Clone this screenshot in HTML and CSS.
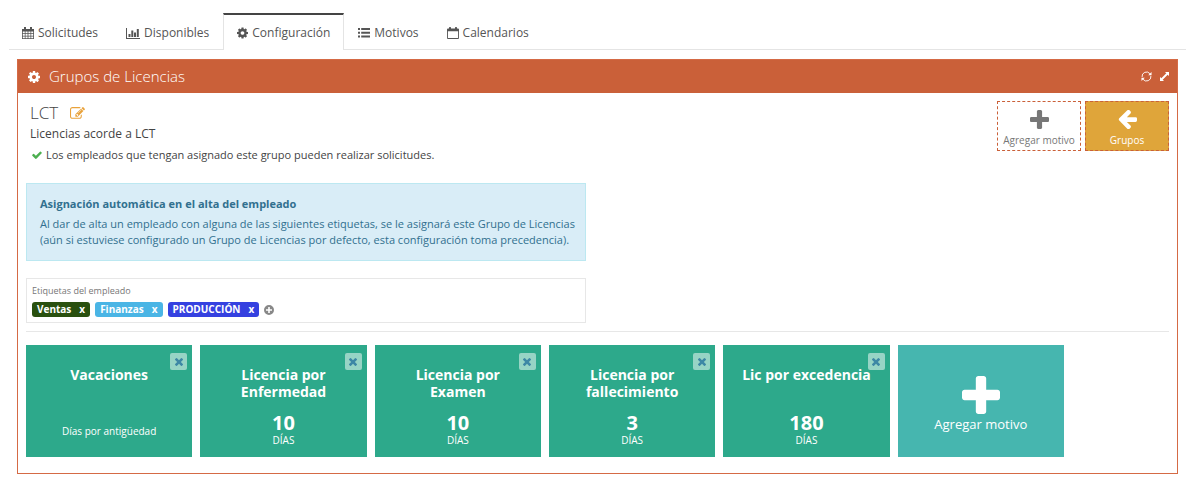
FILE: index.html
```html
<!DOCTYPE html>
<html lang="es">
<head>
<meta charset="utf-8">
<title>Grupos de Licencias</title>
<link rel="stylesheet" href="styles.css">
</head>
<body>
<svg class="sprite" aria-hidden="true">
  <symbol id="cog" viewBox="128 128 1536 1536"><path d="M1152 896q0-106-75-181t-181-75-181 75-75 181 75 181 181 75 181-75 75-181zm512-109v222q0 12-8 23t-20 13l-185 28q-19 54-39 91 35 50 107 138 10 12 10 25t-9 23q-27 37-99 108t-94 71q-12 0-26-9l-138-108q-44 23-91 38-16 136-29 186-7 28-36 28h-222q-14 0-24.500-8.500t-11.500-21.500l-28-184q-49-16-90-37l-141 107q-10 9-25 9-14 0-25-11-126-114-165-168-7-10-7-23 0-12 8-23 15-21 51-66.500t54-70.500q-27-50-41-99l-183-27q-13-2-21-12.500t-8-23.500v-222q0-12 8-23t19-13l186-28q14-46 39-92-40-57-107-138-10-12-10-24 0-10 9-23 26-36 98.500-107.500t94.500-71.500q13 0 26 10l138 107q44-23 91-38 16-136 29-186 7-28 36-28h222q14 0 24.500 8.500t11.500 21.500l28 184q49 16 90 37l142-107q9-9 24-9 13 0 25 10 129 119 165 170 7 8 7 22 0 12-8 23-15 21-51 66.500t-54 70.500q26 50 41 98l183 28q13 2 21 12.500t8 23.500z"/></symbol>
  <symbol id="plus" viewBox="192 128 1408 1408"><path d="M1600 736v192q0 40-28 68t-68 28h-416v416q0 40-28 68t-68 28h-192q-40 0-68-28t-28-68v-416h-416q-40 0-68-28t-28-68v-192q0-40 28-68t68-28h416v-416q0-40 28-68t68-28h192q40 0 68 28t28 68v416h416q40 0 68 28t28 68z"/></symbol>
  <symbol id="arrow" viewBox="128 192 1536 1536"><path d="M1664 896v128q0 53-32.500 90.500t-84.500 37.500h-704l293 294q38 36 38 90t-38 90l-75 76q-37 37-90 37-52 0-91-37l-651-652q-37-37-37-90 0-52 37-91l651-650q38-38 91-38 52 0 90 38l75 74q38 38 38 91t-38 91l-293 293h704q52 0 84.500 37.500t32.500 90.500z"/></symbol>
  <symbol id="check" viewBox="121 256 1550 1280"><path d="M1671 566q0 40-28 68l-724 724-136 136q-28 28-68 28t-68-28l-136-136-362-362q-28-28-28-68t28-68l136-136q28-28 68-28t68 28l294 295 656-657q28-28 68-28t68 28l136 136q28 28 28 68z"/></symbol>
  <symbol id="times" viewBox="302 366 1188 1188"><path d="M1490 1322q0 40-28 68l-136 136q-28 28-68 28t-68-28l-294-294-294 294q-28 28-68 28t-68-28l-136-136q-28-28-28-68t28-68l294-294-294-294q-28-28-28-68t28-68l136-136q28-28 68-28t68 28l294 294 294-294q28-28 68-28t68 28l136 136q28 28 28 68t-28 68l-294 294 294 294q28 28 28 68z"/></symbol>
  <symbol id="edit" viewBox="0 0 1792 1792"><path d="M888 1184l116-116-152-152-116 116v56h96v96h56zm440-720q-16-16-33 1l-350 350q-17 17-1 33t33-1l350-350q17-17 1-33zm80 594v190q0 119-84.500 203.500t-203.500 84.500h-832q-119 0-203.500-84.500t-84.500-203.500v-832q0-119 84.500-203.500t203.500-84.500h832q63 0 117 25 15 7 18 23 3 17-9 29l-49 49q-14 14-32 8-23-6-45-6h-832q-66 0-113 47t-47 113v832q0 66 47 113t113 47h832q66 0 113-47t47-113v-126q0-13 9-22l64-64q15-15 35-7t20 29zm-96-738l288 288-672 672h-288v-288zm444 132l-92 92-288-288 92-92q28-28 68-28t68 28l152 152q28 28 28 68t-28 68z"/></symbol>
  <symbol id="calendar" viewBox="0 0 12 12"><path fill-rule="evenodd" d="M0 2h2V0h2v2h4V0h2v2h2v10H0zM.8 4.500v1.700h2V4.500zm2.700 0v1.700h2.100V4.500zm2.900 0v1.700h2.100V4.500zm2.800 0v1.700h2V4.500zM.8 7v1.700h2V7zm2.700 0v1.700h2.100V7zm2.900 0v1.700h2.100V7zm2.800 0v1.700h2V7zM.8 9.500v1.700h2V9.500zm2.700 0v1.700h2.100V9.500zm2.900 0v1.700h2.100V9.500zm2.800 0v1.700h2V9.500z"/></symbol>
  <symbol id="calendar-o" viewBox="0 0 12 12"><path fill-rule="evenodd" d="M1 1.500h1V.7q0-.7.700-.7h.6q.7 0 .7.700v.8h4V.7q0-.7.700-.7h.6q.7 0 .7.700v.8h1q1 0 1 1V11q0 1-1 1H1q-1 0-1-1V2.500q0-1 1-1zM.9 4.200v6.900h10.200V4.200z"/></symbol>
  <symbol id="chart" viewBox="0 0 14 12"><path d="M0 1h1v10h13v1H0zM2.500 7h2v3h-2zM5.300 3.500h2V10h-2zM8 5.500h2V10H8zM10.800 2h2v8h-2z"/></symbol>
  <symbol id="list" viewBox="0 0 12 10"><path d="M0 0h2v2H0zm3.200 0H12v2H3.200zM0 3.800h2v2H0zm3.200 0H12v2H3.200zM0 7.600h2v2H0zm3.200 0H12v2H3.200z"/></symbol>
  <symbol id="refresh" viewBox="0 0 12 12"><path fill="none" stroke="currentColor" stroke-width="1" d="M1.200 6.500A4.800 4.800 0 0 1 9.800 3M10.800 5.500A4.800 4.800 0 0 1 2.200 9"/><path d="M11.500 1v3.600H7.900zM.5 11V7.400h3.600z"/></symbol>
  <symbol id="expand" viewBox="0 0 10 10"><path d="M5.500 0H10v4.500L8.500 3 3 8.500 4.500 10H0V5.500L1.500 7 7 1.500z"/></symbol>
  <symbol id="plus-circle" viewBox="0 0 10 10"><path fill-rule="evenodd" d="M5 0a5 5 0 1 1 0 10A5 5 0 0 1 5 0zM4.200 2v2.200H2v1.600h2.200V8h1.600V5.800H8V4.200H5.800V2z"/></symbol>
</svg>

<nav class="tabs">
  <a class="tab" href="#solicitudes"><svg class="icon"><use href="#calendar"/></svg>Solicitudes</a>
  <a class="tab" href="#disponibles"><svg class="icon icon-wide"><use href="#chart"/></svg>Disponibles</a>
  <a class="tab tab-active" href="#configuracion" aria-current="page"><svg class="icon icon-cog"><use href="#cog"/></svg>Configuración</a>
  <a class="tab" href="#motivos"><svg class="icon"><use href="#list"/></svg>Motivos</a>
  <a class="tab" href="#calendarios"><svg class="icon"><use href="#calendar-o"/></svg>Calendarios</a>
</nav>

<main class="panel">
  <header class="panel-head">
    <svg class="head-icon"><use href="#cog"/></svg>
    <h1 class="panel-title">Grupos de Licencias</h1>
    <button class="tool" type="button" aria-label="Actualizar"><svg class="tool-refresh"><use href="#refresh"/></svg></button>
    <button class="tool" type="button" aria-label="Expandir"><svg class="tool-expand"><use href="#expand"/></svg></button>
  </header>
  <div class="panel-body">
    <section class="intro">
      <div class="summary">
        <h2 class="group-name">LCT <button class="edit" type="button" aria-label="Editar"><svg class="edit-icon"><use href="#edit"/></svg></button></h2>
        <p class="group-text">Licencias acorde a LCT</p>
        <p class="group-note"><svg class="check-icon"><use href="#check"/></svg>Los empleados que tengan asignado este grupo pueden realizar solicitudes.</p>
      </div>
      <div class="actions">
        <button class="action" type="button"><svg class="action-icon"><use href="#plus"/></svg>Agregar motivo</button>
        <button class="action action-gold" type="button"><svg class="action-icon"><use href="#arrow"/></svg>Grupos</button>
      </div>
    </section>

    <section class="notice">
      <h3 class="notice-title">Asignación automática en el alta del empleado</h3>
      <p class="notice-text">Al dar de alta un empleado con alguna de las siguientes etiquetas, se le asignará este Grupo de Licencias (aún si estuviese configurado un Grupo de Licencias por defecto, esta configuración toma precedencia).</p>
    </section>

    <section class="labels">
      <h3 class="labels-title">Etiquetas del empleado</h3>
      <div class="label-row">
        <span class="label label-green">Ventas <button class="label-x" type="button" aria-label="Quitar Ventas">x</button></span>
        <span class="label label-sky">Finanzas <button class="label-x" type="button" aria-label="Quitar Finanzas">x</button></span>
        <span class="label label-blue">PRODUCCIÓN <button class="label-x" type="button" aria-label="Quitar PRODUCCIÓN">x</button></span>
        <button class="label-add" type="button" aria-label="Agregar etiqueta"><svg class="label-add-icon"><use href="#plus-circle"/></svg></button>
      </div>
    </section>

    <section class="cards">
      <article class="card"><button class="close" type="button" aria-label="Quitar"><svg class="close-icon"><use href="#times"/></svg></button><h3 class="card-title">Vacaciones</h3><p class="card-note">Días por antigüedad</p></article>
      <article class="card"><button class="close" type="button" aria-label="Quitar"><svg class="close-icon"><use href="#times"/></svg></button><h3 class="card-title">Licencia por Enfermedad</h3><p class="days">10</p><p class="unit">DÍAS</p></article>
      <article class="card"><button class="close" type="button" aria-label="Quitar"><svg class="close-icon"><use href="#times"/></svg></button><h3 class="card-title">Licencia por Examen</h3><p class="days">10</p><p class="unit">DÍAS</p></article>
      <article class="card"><button class="close" type="button" aria-label="Quitar"><svg class="close-icon"><use href="#times"/></svg></button><h3 class="card-title">Licencia por fallecimiento</h3><p class="days">3</p><p class="unit">DÍAS</p></article>
      <article class="card"><button class="close" type="button" aria-label="Quitar"><svg class="close-icon"><use href="#times"/></svg></button><h3 class="card-title">Lic por excedencia</h3><p class="days">180</p><p class="unit">DÍAS</p></article>
      <button class="card card-add" type="button"><svg class="card-add-icon"><use href="#plus"/></svg>Agregar motivo</button>
    </section>
  </div>
</main>
</body>
</html>
```
FILE: styles.css
```css
* { box-sizing: border-box; }
body { margin: 0; background: #fff; color: #444; font-family: "Open Sans", sans-serif; font-size: 12px; }
h1, h2, h3, p { margin: 0; font-weight: 400; }
button { margin: 0; padding: 0; border: 0; background: none; color: inherit; font: inherit; cursor: pointer; }
svg { display: block; flex: none; fill: currentColor; }
.sprite { position: absolute; width: 0; height: 0; }

.tabs { display: flex; align-items: flex-end; margin: 13px 3px 0 9px; border-bottom: 1px solid #e4e4e4; }
.tab { display: flex; align-items: center; gap: 4px; height: 34px; padding: 2px 14px 0; color: #555; text-decoration: none; line-height: 16px; }
.tab:first-child { padding-left: 13px; }
.tab-active { height: 37px; padding: 0 13px; margin-bottom: -1px; border: 1px solid #e4e4e4; border-top: 2px solid #444; border-bottom: 0; background: #fff; }
.icon { width: 12px; height: 12px; }
.icon-wide { width: 14px; }
.icon-cog { width: 11px; }

.panel { margin: 9px 11px 0 17px; border: 1px solid #d56a45; }
.panel-head { display: flex; align-items: center; height: 33px; padding: 0 8px 0 10px; background: #ca6039; color: #fff; }
.head-icon { width: 12px; height: 12px; }
.panel-title { flex: 1; margin-left: 9px; padding-bottom: 2px; font-size: 15px; font-weight: 300; line-height: 20px; }
.tool { margin-left: 8px; }
.tool-refresh { width: 11px; height: 11px; }
.tool-expand { width: 9px; height: 9px; }
.panel-body { padding: 8px 8px 16px; }

.intro { display: flex; justify-content: space-between; align-items: flex-start; min-height: 82px; }
.summary { padding-left: 4px; }
.group-name { display: flex; align-items: center; gap: 12px; font-size: 17px; font-weight: 300; line-height: 24px; }
.edit { color: #e9a23b; }
.edit-icon { width: 15px; height: 15px; }
.group-text { font-size: 12px; line-height: 18px; }
.group-note { display: flex; align-items: center; gap: 4px; padding-left: 2px; font-size: 11px; line-height: 24px; }
.check-icon { width: 10px; height: 8px; color: #4caf50; }
.actions { display: flex; gap: 4px; }
.action { display: flex; flex-direction: column; align-items: center; justify-content: flex-end; gap: 3px; width: 84px; height: 50px; padding-bottom: 2px; border: 1px dashed #ca6039; color: #777; font-size: 10px; line-height: 16px; }
.action-gold { background: #dfa53a; color: #fff; }
.action-icon { width: 19px; height: 19px; }

.notice { width: 49%; padding: 12px 8px 12px 13px; border: 1px solid #bce8f1; background: #d9edf7; color: #31708f; }
.notice-title { font-size: 11px; font-weight: 700; line-height: 16px; }
.notice-text { margin-top: 4px; font-size: 11px; line-height: 16px; }

.labels { width: 49%; margin-top: 17px; padding: 5px; border: 1px solid #e7e7e7; }
.labels-title { color: #777; font-size: 9px; line-height: 14px; }
.label-row { display: flex; align-items: center; gap: 5px; margin-top: 4px; }
.label { display: flex; align-items: center; gap: 8px; height: 15px; padding: 0 5px; border-radius: 3px; color: #fff; font-size: 10px; font-weight: 700; line-height: 15px; }
.label-green { background: #29500f; }
.label-sky { background: #4ab5e5; }
.label-blue { background: #3541e0; }
.label-add { color: #888; }
.label-add-icon { width: 10px; height: 10px; }

.cards { display: grid; grid-template-columns: repeat(auto-fill, minmax(160px, 1fr)); gap: 8px; margin-top: 8px; padding: 13px 105px 0 0; border-top: 1px solid #e7e7e7; }
.card { position: relative; display: flex; flex-direction: column; align-items: center; height: 112px; padding: 21px 14px 0; background: #2da98b; color: #fff; text-align: center; }
.card-title { min-height: 46px; font-size: 14px; font-weight: 700; line-height: 17px; }
.card-note { margin-top: 11px; font-size: 10px; line-height: 16px; }
.days { font-size: 20px; font-weight: 700; line-height: 22px; }
.unit { font-size: 10px; line-height: 12px; }
.close { position: absolute; top: 8px; right: 5px; display: flex; align-items: center; justify-content: center; width: 17px; height: 17px; border-radius: 2px; background: #97d4c5; color: #3d87a5; }
.close-icon { width: 8px; height: 8px; }
.card-add { justify-content: center; gap: 2px; padding: 5px 0 0; background: #46b6af; font-size: 13px; line-height: 16px; }
.card-add-icon { width: 38px; height: 38px; }
```
